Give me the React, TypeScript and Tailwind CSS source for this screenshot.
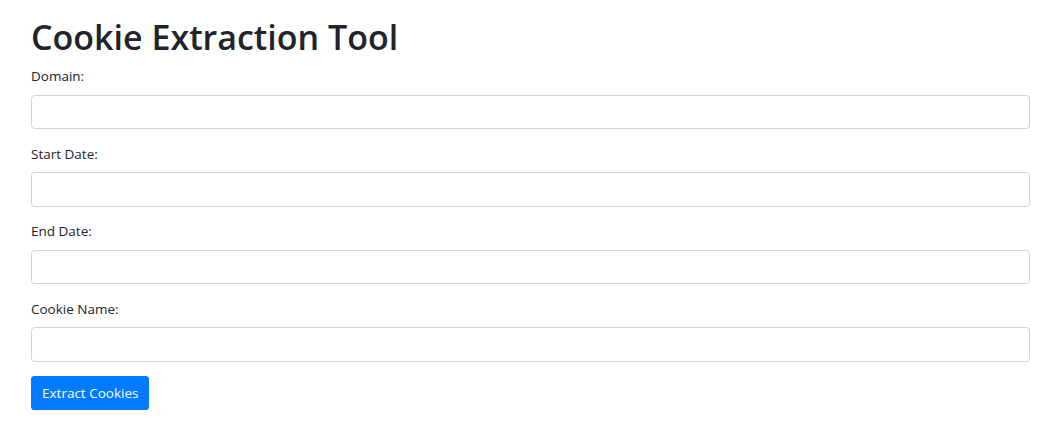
export default function App() {
  const fields = ["Domain:", "Start Date:", "End Date:", "Cookie Name:"];
  return (
    <div
      className="min-h-screen bg-white pl-[31px] pr-[20px] pt-[16px] text-[#212529]"
      style={{ fontFamily: '"Open Sans", "Noto Sans", sans-serif' }}
    >
      <h1 className="mb-[7px] text-[34px] font-semibold leading-[43px]">Cookie Extraction Tool</h1>
      {fields.map((f) => (
        <div key={f} className="mb-[14.4px]">
          <label className="mb-[7.2px] block text-[13.5px] leading-[21.6px]">{f}</label>
          <input
            type="text"
            className="block h-[34.4px] w-full rounded-[3.6px] border border-[#ced4da] bg-white px-[10.8px] text-[14.4px] outline-none"
          />
        </div>
      ))}
      <button className="h-[34px] rounded-[3.6px] bg-[#007bff] px-[11px] text-[13.5px] text-white">
        Extract Cookies
      </button>
    </div>
  );
}
